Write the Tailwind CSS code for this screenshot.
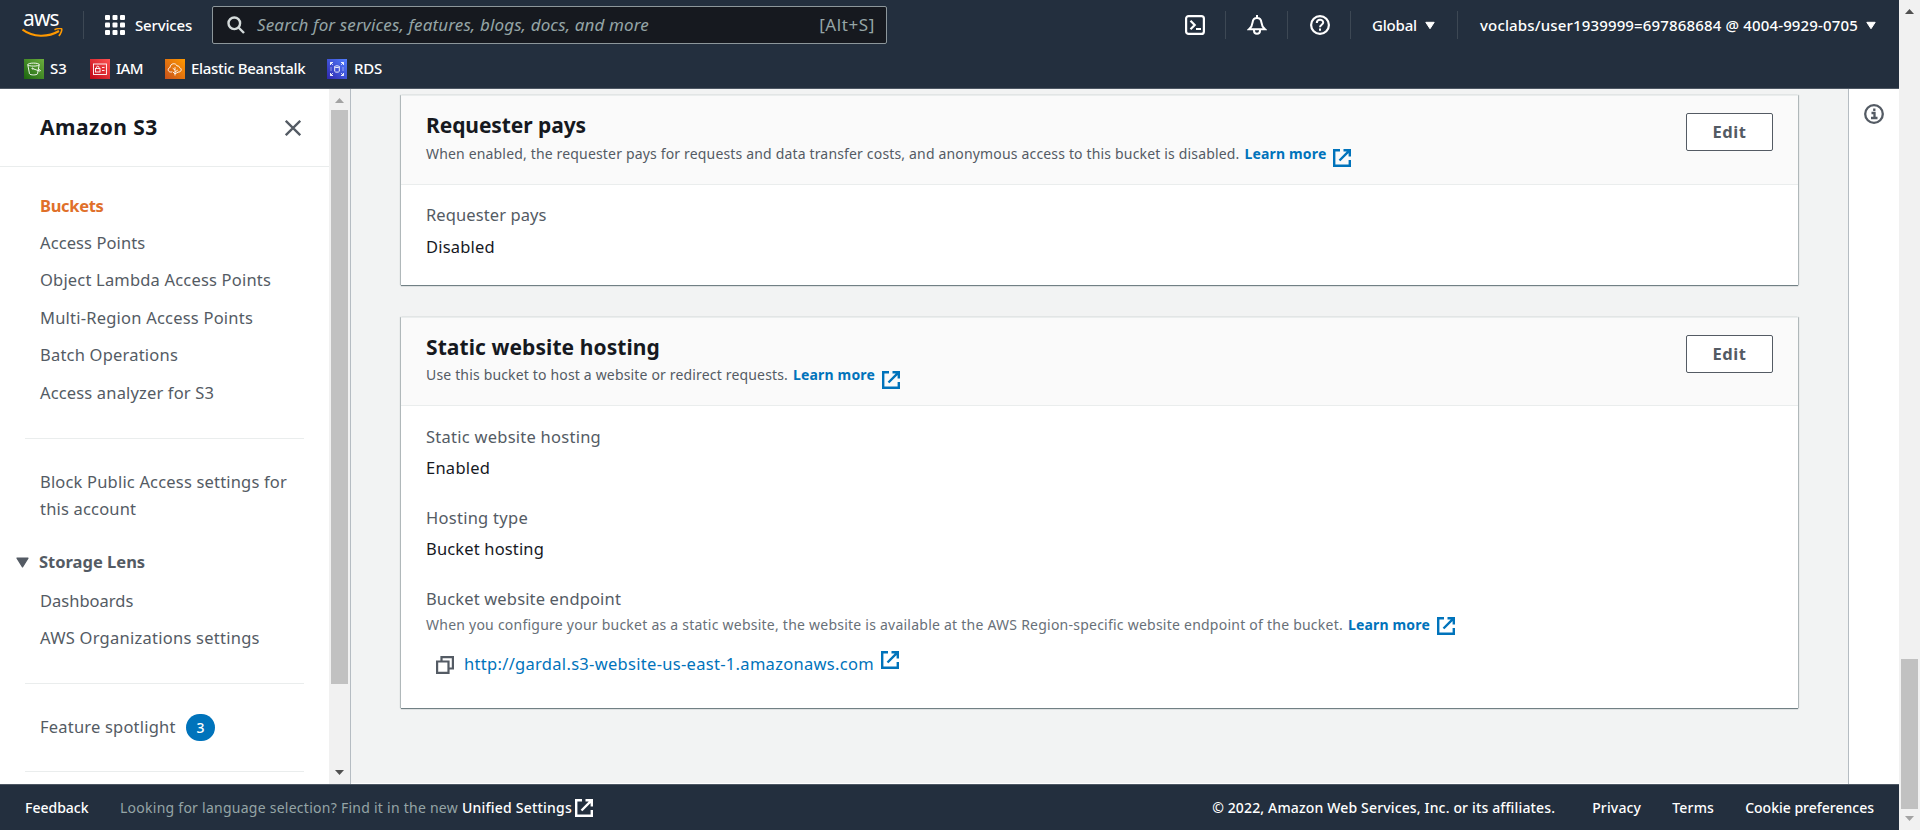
<!DOCTYPE html>
<html lang="en">
<head>
<meta charset="utf-8">
<title>Amazon S3</title>
<script src="https://cdn.jsdelivr.net/npm/@tailwindcss/browser@4"></script>
</head>
<body class="w-[1920px] h-[830px] overflow-hidden flex bg-white text-[#16191f] font-['Noto_Sans','Open_Sans',sans-serif] whitespace-nowrap">
<svg class="hidden">
  <symbol id="ext" viewBox="0 0 18 18"><path d="M7 1.2H1.2v15.6h15.6V11M10.5 1.2h6.3v6.3M16.3 1.7 6.5 11.5" fill="none" stroke="currentColor" stroke-width="2.4"/></symbol>
  <symbol id="down" viewBox="0 0 10 8"><path d="M.8.8h8.4L5 7.2z" fill="currentColor" stroke="currentColor" stroke-linejoin="round"/></symbol>
</svg>
<div class="w-[1899px] flex flex-col">
  <header class="h-[89px] shrink-0 bg-[#232f3e] border-b border-[#4d5763] text-white">
    <div class="h-[50px] flex items-start">
      <div class="ml-[22px] mt-[6px] w-[41px] h-[33px] shrink-0 flex flex-col"><span class="h-[22px] leading-[24px] text-[21px] tracking-[-0.900px] pl-px">aws</span><svg class="w-[41px] h-[10px] shrink-0" viewBox="0 16 41 10"><path d="M.5 17.500C11 25.500 26 25.500 37 19" fill="none" stroke="#f90" stroke-width="2.100"/><path d="M32.500 17.800c3-1.700 7-1.500 7.200-.8.300 1-.6 4.800-2.900 6.800" fill="none" stroke="#f90" stroke-width="1.600"/></svg></div>
      <i class="ml-[20px] mt-[11px] w-px h-[28px] bg-[#3d4854]"></i>
      <svg class="ml-[21px] mt-[15px] w-5 h-5" viewBox="0 0 20 20" fill="#fff"><rect width="5" height="5" rx="1"/><rect x="7.500" width="5" height="5" rx="1"/><rect x="15" width="5" height="5" rx="1"/><rect y="7.500" width="5" height="5" rx="1"/><rect x="7.500" y="7.500" width="5" height="5" rx="1"/><rect x="15" y="7.500" width="5" height="5" rx="1"/><rect y="15" width="5" height="5" rx="1"/><rect x="7.500" y="15" width="5" height="5" rx="1"/><rect x="15" y="15" width="5" height="5" rx="1"/></svg>
      <div class="ml-[10px] w-[77px] leading-[50px] text-[15px] font-medium tracking-[-0.180px]">Services</div>
      <div class="mt-[6px] w-[675px] h-[38px] rounded-[2px] border border-[#8d979b] bg-[#16191f] flex items-center pl-[14px] pr-[11px] text-[17px] text-[#95a5a6]">
        <svg class="w-[18px] h-[18px] mr-[12px]" viewBox="0 0 18 18" fill="none" stroke="#d5dbdb" stroke-width="2.400"><circle cx="7.300" cy="7.300" r="5.800"/><path d="m11.500 11.500 5.500 5.500"/></svg>
        <span class="italic tracking-[0.141px]">Search for services, features, blogs, docs, and more</span>
        <span class="ml-auto tracking-[0.600px]">[Alt+S]</span>
      </div>
      <svg class="ml-[298px] mt-[15px] w-5 h-5" viewBox="0 0 20 20" fill="none" stroke="#fff" stroke-width="2.200"><rect x="1.100" y="1.100" width="17.800" height="17.800" rx="2.500"/><path d="m5.500 5.800 4.200 4.200-4.200 4.200M11 14h5"/></svg>
      <i class="ml-[20px] mt-[11px] w-px h-[28px] bg-[#3d4854]"></i>
      <svg class="ml-[21px] mt-[15px] w-5 h-5" viewBox="0 0 20 20" fill="none" stroke="#fff" stroke-width="2"><path d="M10 0v2.500M2 14.300h16c-2.200-2-3.300-3.800-3.600-7C14.100 4.300 12.500 3 10 3S5.900 4.300 5.600 7.300C5.300 10.500 4.200 12.300 2 14.300zM7 14.500v1.200c0 4 6 4 6 0v-1.200"/></svg>
      <i class="ml-[20px] mt-[11px] w-px h-[28px] bg-[#3d4854]"></i>
      <svg class="ml-[22px] mt-[15px] w-5 h-5" viewBox="0 0 20 20" fill="none" stroke="#fff" stroke-width="2.200"><circle cx="10" cy="10" r="8.900"/><path d="M6.800 8c0-4.300 6.400-4.300 6.400-.4C13.200 9.800 10 9.800 10 12.300M10 13.500v2.200" stroke-width="2"/></svg>
      <i class="ml-[20px] mt-[11px] w-px h-[28px] bg-[#3d4854]"></i>
      <div class="ml-[21px] w-[53px] leading-[50px] text-[15px] font-medium tracking-[-0.177px]">Global</div>
      <svg class="mt-[21px] w-[10px] h-[9px]"><use href="#down"/></svg>
      <i class="ml-[22px] mt-[11px] w-px h-[28px] bg-[#3d4854]"></i>
      <div class="ml-[22px] w-[386px] leading-[50px] text-[15px] font-medium tracking-[0.156px]">voclabs/user1939999=697868684 @ 4004-9929-0705</div>
      <svg class="mt-[21px] w-[10px] h-[9px]"><use href="#down"/></svg>
    </div>
    <div class="h-[38px] flex items-center pl-[24px] text-[15px] leading-[20px] font-medium">
      <svg class="w-5 h-5" viewBox="0 0 20 20"><defs><linearGradient id="g1" x1="0" y1="1" x2="1" y2="0"><stop stop-color="#1b660f"/><stop offset="1" stop-color="#6cae3e"/></linearGradient><linearGradient id="g2" x1="0" y1="1" x2="1" y2="0"><stop stop-color="#bd0816"/><stop offset="1" stop-color="#ff5252"/></linearGradient><linearGradient id="g3" x1="0" y1="1" x2="1" y2="0"><stop stop-color="#c8511b"/><stop offset="1" stop-color="#f90"/></linearGradient><linearGradient id="g4" x1="0" y1="1" x2="1" y2="0"><stop stop-color="#2e27ad"/><stop offset="1" stop-color="#527fff"/></linearGradient></defs><rect width="20" height="20" fill="url(#g1)"/><g fill="none" stroke="#fff" stroke-width=".9"><ellipse cx="9.500" cy="5.600" rx="5.700" ry="1.500"/><path d="m3.800 5.800 1.700 9c.6 1.500 7.400 1.500 8 0l1.700-9M8.800 9.700l6.700 2.300c1.500.3 1-1-.6-1.800"/><circle cx="8.500" cy="9.500" r=".6"/></g></svg>
      <div class="w-[40px] pl-[6px] pb-[2px]">S3</div>
      <svg class="ml-[6px] w-5 h-5" viewBox="0 0 20 20"><rect width="20" height="20" fill="url(#g2)"/><g fill="none" stroke="#fff" stroke-width=".9"><rect x="3.500" y="5" width="13" height="10.500"/><rect x="5.500" y="9.500" width="4.500" height="3.500"/><path d="M6.500 9.500V8.300c0-1.500 2.500-1.500 2.500 0v1.200M12 8.500h2.500M12 11.500h2.500"/></g></svg>
      <div class="w-[55px] pl-[6px] pb-[2px] tracking-[-0.700px]">IAM</div>
      <svg class="w-5 h-5" viewBox="0 0 20 20"><rect width="20" height="20" fill="url(#g3)"/><g fill="none" stroke="#fff" stroke-width=".9"><path d="M7 13H5.500c-3-.2-3-4-.4-4.500C5.200 4 11 3.500 12 7c1.500-.5 2.500.6 2.500 1.700 2.500.6 2.200 4-.5 4.300h-1"/><path d="M10 16.500V8.200M10 11 7.700 9.200M10 13l2.800-2M10 14.800l-2.300-2M10 14.800l3-1.600"/></g></svg>
      <div class="w-[142px] pl-[6px] pb-[2px] tracking-[-0.320px]">Elastic Beanstalk</div>
      <svg class="w-5 h-5" viewBox="0 0 20 20"><rect width="20" height="20" fill="url(#g4)"/><g fill="none" stroke="#fff" stroke-width=".9"><path d="M3.500 6V3.500H6M3.500 3.500l2.300 2.300M14 3.500h2.500V6M16.500 3.500l-2.300 2.300M3.500 14v2.500H6M3.500 16.500l2.300-2.300M14 16.500h2.500V14M16.500 16.500l-2.300-2.300"/><ellipse cx="10" cy="7.700" rx="2.300" ry=".9"/><path d="M7.700 7.700v4.600c.3 1.200 4.300 1.200 4.600 0V7.700"/><path d="M4 8.500v3M16 8.500v3" stroke-dasharray="1"/></g></svg>
      <div class="pl-[7px] pb-[2px] tracking-[-0.230px]">RDS</div>
    </div>
  </header>

  <div class="flex h-[695px] shrink-0">
    <nav class="w-[329px] text-[16.500px] text-[#545b64] overflow-hidden">
      <div class="h-[78px] border-b border-[#eaeded] flex items-center pl-[40px] pr-[28px] justify-between text-[21px] font-bold text-[#16191f]"><span class="tracking-[0.450px]">Amazon S3</span>
        <svg class="w-[16px] h-[16px]" viewBox="0 0 16 16"><path d="m.8.800 14.400 14.400M15.200.8.800 15.200" stroke="#545b64" stroke-width="2.300"/></svg></div>
      <div class="pt-[20px] pl-[40px] leading-[37.500px]">
        <div class="h-[37px] font-bold text-[#e0702a] tracking-[-0.320px]">Buckets</div>
        <div class="h-[37px] leading-[37px] tracking-[0.090px]">Access Points</div>
        <div class="h-[38px] leading-[38px] tracking-[0.185px]">Object Lambda Access Points</div>
        <div class="h-[37px] leading-[37px] tracking-[0.213px]">Multi-Region Access Points</div>
        <div class="h-[38px] leading-[38px] tracking-[0.204px]">Batch Operations</div>
        <div class="h-[37px] leading-[37px] tracking-[0.155px]">Access analyzer for S3</div>
      </div>
      <div class="mt-[27px] ml-[25px] w-[279px] border-t border-[#eaeded]"></div>
      <div class="mt-[29px] pl-[40px] leading-[27px] tracking-[0.181px]">Block Public Access settings for<br>this account</div>
      <div class="mt-[26px] pl-[16px] leading-[27px] font-bold flex items-center"><svg class="w-[13px] h-[11px] mt-px mr-[10px]" viewBox="0 0 10 8" preserveAspectRatio="none"><use href="#down"/></svg>Storage Lens</div>
      <div class="mt-[6.500px] pl-[40px] leading-[37.500px]">Dashboards<br><span class="tracking-[0.250px]">AWS Organizations settings</span></div>
      <div class="mt-[26px] ml-[25px] w-[279px] border-t border-[#eaeded]"></div>
      <div class="mt-[30px] pl-[40px] flex items-center h-[28px]"><span class="w-[146px] tracking-[0.200px]">Feature spotlight</span><span class="w-[29px] h-[27px] rounded-[14px] bg-[#0073bb] text-white text-[14px] font-medium flex items-center justify-center">3</span></div>
      <div class="mt-[29px] ml-[25px] w-[279px] border-t border-[#eaeded]"></div>
    </nav>
    <div class="w-[22px] bg-[#f1f1f1] border-r border-[#b5bcc2] flex flex-col items-center">
      <svg class="mt-[9px] w-[9px] h-[5px]" viewBox="0 0 9 5"><path d="M0 5 4.500 0 9 5z" fill="#a3a3a3"/></svg>
      <div class="mt-[7px] w-[17px] h-[574px] bg-[#c1c1c1]"></div>
      <svg class="mt-auto mb-[9px] w-[9px] h-[5px]" viewBox="0 0 9 5"><path d="M0 0 4.500 5 9 0z" fill="#505050"/></svg>
    </div>
    <main class="flex-1 bg-[#f2f3f3] border-b border-white pl-[50px] pt-[6px]">
      <section class="w-[1397px] h-[190px] bg-white border-t border-[#eaeded] shadow-[0_1px_1px_0_rgba(0,28,36,.5),1px_0_1px_0_rgba(0,28,36,.2),-1px_0_1px_0_rgba(0,28,36,.2)]">
        <div class="h-[89px] bg-[#fafafa] border-b border-[#eaeded] pl-[25px] pr-[25px] pt-[17px] flex justify-between">
          <div class="-mt-[2px]"><h2 class="text-[21px] leading-[28px] font-bold tracking-[-0.080px]">Requester pays</h2>
            <p class="mt-px text-[14px] leading-[28px] text-[#545b64] flex"><span class="tracking-[0.166px]">When enabled, the requester pays for requests and data transfer costs, and anonymous access to this bucket is disabled.</span><b class="ml-[5px] text-[#0073bb] tracking-[0.169px]">Learn more</b><svg class="ml-[7px] mt-[9px] w-[18px] h-[18px] text-[#0073bb]"><use href="#ext"/></svg></p></div>
          <button class="w-[87px] h-[38px] bg-white rounded-[2px] border border-[#545b64] text-[#545b64] text-[16.500px] font-bold leading-[35px] pb-px tracking-[0.500px]">Edit</button>
        </div>
        <div class="pl-[25px] pt-[14px] text-[16.500px]"><div class="leading-[32px] text-[#545b64] tracking-[0.100px]">Requester pays</div><div class="leading-[32px] tracking-[0.180px]">Disabled</div></div>
      </section>
      <section class="mt-[32px] w-[1397px] h-[391px] bg-white border-t border-[#eaeded] shadow-[0_1px_1px_0_rgba(0,28,36,.5),1px_0_1px_0_rgba(0,28,36,.2),-1px_0_1px_0_rgba(0,28,36,.2)]">
        <div class="h-[88px] bg-[#fafafa] border-b border-[#eaeded] pl-[25px] pr-[25px] pt-[17px] flex justify-between">
          <div class="-mt-[2px]"><h2 class="text-[21px] leading-[28px] font-bold tracking-[0.070px]">Static website hosting</h2>
            <p class="text-[14px] leading-[28px] text-[#545b64] flex"><span class="tracking-[0.166px]">Use this bucket to host a website or redirect requests.</span><b class="ml-[5px] text-[#0073bb] tracking-[0.169px]">Learn more</b><svg class="ml-[7px] mt-[10px] w-[18px] h-[18px] text-[#0073bb]"><use href="#ext"/></svg></p></div>
          <button class="w-[87px] h-[38px] bg-white rounded-[2px] border border-[#545b64] text-[#545b64] text-[16.500px] font-bold leading-[35px] pb-px tracking-[0.500px]">Edit</button>
        </div>
        <div class="pl-[25px] pt-[15px] text-[16.500px]">
          <div class="leading-[32px] text-[#545b64] tracking-[0.251px]">Static website hosting</div><div class="leading-[30px] tracking-[0.250px]">Enabled</div>
          <div class="mt-[19px] leading-[32px] text-[#545b64] tracking-[0.267px]">Hosting type</div><div class="leading-[30px] tracking-[0.153px]">Bucket hosting</div>
          <div class="mt-[19px] leading-[32px] text-[#545b64] tracking-[0.150px]">Bucket website endpoint</div>
          <p class="-mt-[4px] text-[14px] leading-[28px] text-[#687078] flex"><span class="tracking-[0.236px]">When you configure your bucket as a static website, the website is available at the AWS Region-specific website endpoint of the bucket.</span><b class="ml-[5px] text-[#0073bb] tracking-[0.169px]">Learn more</b><svg class="ml-[7px] mt-[6px] w-[18px] h-[18px] text-[#0073bb]"><use href="#ext"/></svg></p>
          <div class="mt-[8px] pl-[10px] leading-[33px] text-[#0073bb] flex"><svg class="mt-[9px] w-[18px] h-[18px] mr-[10px]" viewBox="0 0 18 18" fill="none" stroke="#545b64" stroke-width="2.200"><path d="M1.100 5.500h11.400v11.400H1.100zM5.500 5V1.100h11.400v11.400h-4"/></svg><span class="tracking-[0.302px]">http://gardal.s3-website-us-east-1.amazonaws.com</span><svg class="ml-[7px] mt-[4px] w-[18px] h-[18px]"><use href="#ext"/></svg></div>
        </div>
      </section>
    </main>
    <aside class="w-[51px] border-l border-[#b5bcc2] bg-white pl-[15px] pt-[15px]">
      <svg class="w-5 h-5" viewBox="0 0 20 20" fill="none" stroke="#545b64" stroke-width="2.300"><circle cx="10" cy="10" r="8.800"/><path d="M10.300 4.500v2.500M7.500 9h3v5M7 14h6.500"/></svg>
    </aside>
  </div>

  <footer class="h-[46px] bg-[#232f3e] border-t border-[#4d5763] text-white text-[14px] flex items-center pl-[25px] pr-[25px] font-medium">
    <div class="w-[95px]">Feedback</div>
    <span class="text-[#95a5a6] font-normal tracking-[0.256px]">Looking for language selection? Find it in the new</span>
    <span class="ml-[4px] tracking-[0.218px]">Unified Settings</span>
    <svg class="ml-[3px] w-[18px] h-[18px]"><use href="#ext"/></svg>
    <span class="ml-auto mr-[37px] tracking-[0.150px]">© 2022, Amazon Web Services, Inc. or its affiliates.</span>
    <span class="mr-[31px] tracking-[0.156px]">Privacy</span><span class="mr-[31px] tracking-[0.216px]">Terms</span><span>Cookie preferences</span>
  </footer>
</div>
<div class="w-[21px] bg-[#f1f1f1] flex flex-col items-center">
  <svg class="mt-[9px] w-[9px] h-[5px]" viewBox="0 0 9 5"><path d="M0 5 4.500 0 9 5z" fill="#505050"/></svg>
  <div class="mt-[645px] w-[17px] h-[150px] bg-[#c1c1c1]"></div>
  <svg class="mt-[7px] w-[9px] h-[5px]" viewBox="0 0 9 5"><path d="M0 0 4.500 5 9 0z" fill="#a3a3a3"/></svg>
</div>
</body>
</html>
